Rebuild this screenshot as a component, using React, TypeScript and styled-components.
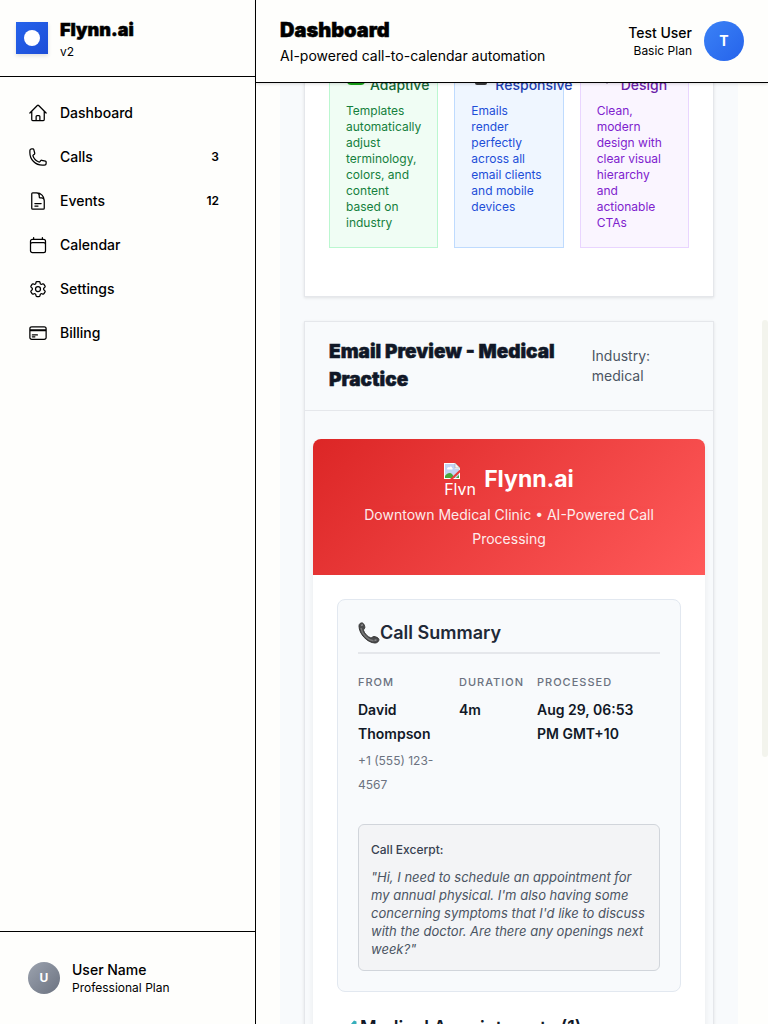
import React, { useLayoutEffect, useRef } from "react";
import styled, { createGlobalStyle } from "styled-components";
import {
  HiOutlineHome,
  HiOutlinePhone,
  HiOutlineDocumentText,
  HiOutlineCalendar,
  HiOutlineCog6Tooth,
  HiOutlineCreditCard,
} from "react-icons/hi2";

const GlobalStyle = createGlobalStyle`
  *, *::before, *::after { box-sizing: border-box; }
  body {
    margin: 0;
    background: #fefefc;
    color: #000;
    font-family: Inter, "Liberation Sans", sans-serif;
    font-size: 14px;
    line-height: 20px;
    -webkit-font-smoothing: antialiased;
  }
  h1, h2, h3, h4, p, dl, dd, ul { margin: 0; padding: 0; }
  ul { list-style: none; }
`;

const Shell = styled.div`
  display: grid;
  grid-template-columns: 256px minmax(0, 1fr);
  height: 100vh;
`;

const Sidebar = styled.aside`
  display: flex;
  flex-direction: column;
  border-right: 1px solid #000;
`;

const Brand = styled.div`
  display: flex;
  align-items: center;
  gap: 12px;
  padding: 16px;
  border-bottom: 1px solid #000;
`;

const BrandMark = styled.div`
  display: grid;
  place-items: center;
  width: 32px;
  height: 32px;
  background: linear-gradient(135deg, #2563eb, #1d4ed8);
  box-shadow: 0 2px 4px rgba(0, 0, 0, 0.12);

  &::after {
    content: "";
    width: 16px;
    height: 16px;
    border-radius: 50%;
    background: #fff;
  }
`;

const DisplayText = styled.h2<{ $size: number; $color?: string }>`
  font-size: ${(p) => p.$size}px;
  line-height: 28px;
  font-weight: 900;
  color: ${(p) => p.$color ?? "#000"};
  -webkit-text-stroke: 0.5px currentColor;
`;

const Small = styled.p`
  font-size: 12px;
  line-height: 16px;
`;

const Nav = styled.nav`
  flex: 1;
  padding: 16px;
`;

const NavList = styled.ul`
  display: flex;
  flex-direction: column;
  gap: 4px;
`;

const NavLink = styled.a`
  display: flex;
  align-items: center;
  gap: 12px;
  height: 40px;
  padding: 0 12px;
  color: inherit;
  font-weight: 500;
  text-decoration: none;

  svg { width: 20px; height: 20px; }
`;

const NavCount = styled.span`
  margin-left: auto;
  padding: 0 8px;
  font-size: 12px;
  line-height: 16px;
  font-weight: 600;
`;

const SidebarFooter = styled.div`
  padding: 16px;
  border-top: 1px solid #000;
`;

const Account = styled.div`
  display: flex;
  align-items: center;
  gap: 12px;
  padding: 12px;
`;

const Avatar = styled.div<{ $size: number; $from: string; $to: string }>`
  display: grid;
  place-items: center;
  width: ${(p) => p.$size}px;
  height: ${(p) => p.$size}px;
  border-radius: 50%;
  background: linear-gradient(135deg, ${(p) => p.$from}, ${(p) => p.$to});
  color: #fff;
  font-size: ${(p) => (p.$size > 32 ? 14 : 12)}px;
  font-weight: 700;
`;

const PersonName = styled.p`
  font-weight: 500;
`;

const Main = styled.div`
  display: flex;
  flex-direction: column;
  min-height: 0;
`;

const TopBar = styled.header`
  position: relative;
  z-index: 1;
  display: flex;
  align-items: center;
  justify-content: space-between;
  padding: 16px 24px;
  border-bottom: 1px solid #000;
  background: #fefefc;
  box-shadow: 0 1px 3px rgba(0, 0, 0, 0.15);
`;

const Tagline = styled.p`
  margin-top: 2px;
`;

const TopUser = styled.div`
  display: flex;
  align-items: center;
  gap: 12px;
  text-align: right;
`;

const Viewport = styled.div`
  display: grid;
  grid-template-columns: minmax(0, 1fr) 6px;
  grid-template-rows: minmax(0, 1fr);
  flex: 1;
  min-height: 0;
`;

const Scroller = styled.main`
  overflow-y: auto;
  padding: 24px;
  scrollbar-width: none;
`;

const ScrollTrack = styled.div`
  display: grid;
  grid-template-rows: 237fr 437fr 267fr;
`;

const ScrollThumb = styled.div`
  grid-row: 2;
  border-radius: 3px;
  background: #f3f4ed;
`;

const Canvas = styled.div`
  display: flex;
  flex-direction: column;
  gap: 24px;
  padding: 24px;
  background: #f8fafc;
`;

const Card = styled.section`
  border: 1px solid #e5e7eb;
  background: #fff;
  box-shadow: 0 1px 3px rgba(0, 0, 0, 0.1);
`;

const Features = styled.div`
  display: grid;
  grid-template-columns: repeat(3, minmax(0, 1fr));
  gap: 16px;
  padding: 24px 24px 48px;
`;

const tones = {
  green: { bg: "#f0fdf4", line: "#bbf7d0", title: "#166534", text: "#15803d" },
  blue: { bg: "#eff6ff", line: "#bfdbfe", title: "#1e40af", text: "#1d4ed8" },
  purple: { bg: "#faf5ff", line: "#e9d5ff", title: "#6b21a8", text: "#7e22ce" },
};

type Tone = keyof typeof tones;

const FeatureBox = styled.article<{ $tone: Tone }>`
  padding: 16px;
  border: 1px solid ${(p) => tones[p.$tone].line};
  background: ${(p) => tones[p.$tone].bg};
  color: ${(p) => tones[p.$tone].text};
`;

const FeatureTitle = styled.h4<{ $tone: Tone }>`
  display: flex;
  align-items: center;
  gap: 4px;
  margin-bottom: 8px;
  color: ${(p) => tones[p.$tone].title};
  font-size: 14px;
  font-weight: 500;

  svg { flex: none; }
`;

const PreviewHeader = styled.div`
  display: flex;
  align-items: center;
  justify-content: space-between;
  padding: 16px 24px;
  border-bottom: 1px solid #e5e7eb;
  background: #f8fafc;
`;

const Industry = styled.p`
  flex: 0 0 27%;
  padding-right: 24px;
  color: #4b5563;
`;

const EmailStage = styled.div`
  padding: 28px 8px;
  background: #f8fafc;
`;

const Email = styled.article`
  overflow: hidden;
  border-radius: 8px;
  background: #fff;
  box-shadow: 0 4px 6px rgba(0, 0, 0, 0.07);
`;

const EmailHero = styled.div`
  padding: 24px;
  background: linear-gradient(135deg, #dc2626, #ff5a5a);
  color: #fff;
  text-align: center;
`;

const HeroBrand = styled.div`
  display: flex;
  align-items: center;
  justify-content: center;
  gap: 8px;
  margin-bottom: 8px;
`;

const LogoFallback = styled.div`
  width: 32px;
  height: 32px;
  overflow: hidden;
  text-align: left;
  font-size: 16px;
  line-height: 20px;
  white-space: nowrap;

  svg { display: block; }
`;

const HeroName = styled.h3`
  font-size: 23px;
  line-height: 32px;
  font-weight: 700;
`;

const HeroLine = styled.p`
  line-height: 24px;
  opacity: 0.9;
`;

const EmailBody = styled.div`
  padding: 24px;
`;

const Summary = styled.section`
  margin-bottom: 24px;
  padding: 20px;
  border: 1px solid #e2e8f0;
  border-radius: 8px;
  background: #f8fafc;
`;

const SectionTitle = styled.h3`
  display: flex;
  align-items: center;
  color: #111827;
  font-size: 18px;
  line-height: 24px;
  font-weight: 600;
`;

const SummaryTitle = styled(SectionTitle)`
  padding-bottom: 6px;
  border-bottom: 2px solid #e5e7eb;
  color: #1f2937;
  line-height: 26px;
`;

const Facts = styled.dl`
  display: grid;
  grid-template-columns: minmax(0, 85fr) minmax(0, 62fr) minmax(0, 107fr);
  gap: 16px;
  margin: 20px 0 27px;
  padding-right: 16px;
`;

const FactLabel = styled.dt`
  margin-bottom: 8px;
  color: #6b7280;
  font-size: 11px;
  line-height: 16px;
  font-weight: 500;
  letter-spacing: 1px;
  text-transform: uppercase;
`;

const FactValue = styled.dd`
  color: #111827;
  line-height: 24px;
  font-weight: 600;
`;

const FactNote = styled.dd`
  margin-top: 3px;
  color: #6b7280;
  font-size: 12px;
  line-height: 24px;
`;

const Excerpt = styled.div`
  padding: 12px;
  border: 1px solid #d1d5db;
  border-radius: 6px;
  background: #f3f4f6;
`;

const ExcerptLabel = styled.p`
  margin-bottom: 5px;
  color: #374151;
  font-size: 12px;
  line-height: 26px;
  font-weight: 500;
`;

const Quote = styled.p`
  color: #4b5563;
  font-size: 13px;
  line-height: 18px;
  font-style: italic;
`;

const CheckGlyph = () => (
  <svg width="20" height="20" viewBox="0 0 20 20" aria-hidden="true">
    <rect x="1" y="1" width="18" height="19" rx="4" fill="#16a316" />
    <path d="M5 10l4 4 7-9" fill="none" stroke="#fff" strokeWidth="2.5" />
  </svg>
);

const MobileGlyph = () => (
  <svg width="20" height="20" viewBox="0 0 20 20" aria-hidden="true">
    <rect x="4" y="0" width="12" height="20" rx="2" fill="#3a3a3c" />
    <rect x="6" y="2" width="8" height="14" fill="#6aa8e8" />
  </svg>
);

const SparkGlyph = () => (
  <svg width="20" height="20" viewBox="0 0 20 20" aria-hidden="true">
    <path d="M8 3l2 5 5 2-5 2-2 5-2-5-5-2 5-2z" fill="#f6c445" />
    <circle cx="10" cy="18" r="1" fill="#b9a9c9" />
  </svg>
);

const HandsetGlyph = () => (
  <svg width="22" height="24" viewBox="0 0 22 24" aria-hidden="true">
    <path
      d="M1 5C1 2.500 3 1.500 4.500 2c1.500.6 2.500 3.500 2.300 4.800C6.600 8 5.300 8.200 5.600 9.500c.8 3 4 6.300 7 7.300 1.200.4 1.700-1.200 3.400-1.200 1.800 0 4.700 1.400 4.900 2.800.2 1.800-1.700 3.600-3.900 3.600C9.500 21.800 1 13 1 5z"
      fill="#4b4b4d"
      stroke="#333"
      strokeWidth="1"
    />
    <path d="M3 7c.8 6 6.500 12 12.500 12.800" fill="none" stroke="#777" strokeWidth="1.500" />
    <path d="M3 4.500l2-.8M16.500 19.500l2-.6" stroke="#8a8a8c" strokeWidth="1.500" />
  </svg>
);

const MedicalGlyph = () => (
  <svg width="23" height="24" viewBox="0 0 23 24" aria-hidden="true">
    <path d="M14 8l3-3.500 2.500 1V9l-8 9-4-3z" fill="#35aebb" />
    <path d="M4 20l5-5 2 2-5 5z" fill="#8aa0ad" />
  </svg>
);

const BrokenImageGlyph = () => (
  <svg width="16" height="16" viewBox="0 0 16 16" aria-hidden="true">
    <path d="M0 0h11l5 5v11H0z" fill="#fff" />
    <path d="M1 1h10v5h4v9H1z" fill="#c3d4f5" />
    <path d="M3 6c0-2 2-2 2.500-1.500C6 3 8 3.500 8 5c1 0 1 1.500 0 1.500H3.500z" fill="#fff" />
    <path d="M1 15v-2c2-3 5-4 7-2l3 4z" fill="#4ba63a" />
    <path d="M11 0l5 5h-5z" fill="#f4f4f4" stroke="#999" strokeWidth="0.500" />
    <path d="M16 6.500v3L9 16H6z" fill="#e93c3c" />
    <path d="M12 15l3-3v3z" fill="#4ba63a" />
  </svg>
);

const navItems = [
  { label: "Dashboard", Icon: HiOutlineHome },
  { label: "Calls", Icon: HiOutlinePhone, count: 3 },
  { label: "Events", Icon: HiOutlineDocumentText, count: 12 },
  { label: "Calendar", Icon: HiOutlineCalendar },
  { label: "Settings", Icon: HiOutlineCog6Tooth },
  { label: "Billing", Icon: HiOutlineCreditCard },
];

const features: { tone: Tone; title: string; text: string; Glyph: React.FC }[] = [
  {
    tone: "green",
    title: "Industry Adaptive",
    text: "Templates automatically adjust terminology, colors, and content based on industry",
    Glyph: CheckGlyph,
  },
  {
    tone: "blue",
    title: "Mobile Responsive",
    text: "Emails render perfectly across all email clients and mobile devices",
    Glyph: MobileGlyph,
  },
  {
    tone: "purple",
    title: "Modern Design",
    text: "Clean, modern design with clear visual hierarchy and actionable CTAs",
    Glyph: SparkGlyph,
  },
];

// Distance the preview page is scrolled when it opens.
const INITIAL_SCROLL = 118;

export default function App() {
  const scroller = useRef<HTMLElement>(null);

  useLayoutEffect(() => {
    if (scroller.current) scroller.current.scrollTop = INITIAL_SCROLL;
  }, []);

  return (
    <>
      <GlobalStyle />
      <Shell>
        <Sidebar>
          <Brand>
            <BrandMark />
            <div>
              <DisplayText $size={18}>Flynn.ai</DisplayText>
              <Small>v2</Small>
            </div>
          </Brand>
          <Nav aria-label="Main">
            <NavList>
              {navItems.map(({ label, Icon, count }) => (
                <li key={label}>
                  <NavLink href="#">
                    <Icon />
                    {label}
                    {count && <NavCount>{count}</NavCount>}
                  </NavLink>
                </li>
              ))}
            </NavList>
          </Nav>
          <SidebarFooter>
            <Account>
              <Avatar $size={32} $from="#9ca3af" $to="#6b7280">U</Avatar>
              <div>
                <PersonName>User Name</PersonName>
                <Small>Professional Plan</Small>
              </div>
            </Account>
          </SidebarFooter>
        </Sidebar>

        <Main>
          <TopBar>
            <div>
              <DisplayText as="h1" $size={20}>Dashboard</DisplayText>
              <Tagline>AI-powered call-to-calendar automation</Tagline>
            </div>
            <TopUser>
              <div>
                <PersonName>Test User</PersonName>
                <Small>Basic Plan</Small>
              </div>
              <Avatar $size={40} $from="#3b82f6" $to="#2563eb">T</Avatar>
            </TopUser>
          </TopBar>

          <Viewport>
            <Scroller ref={scroller}>
              <Canvas>
                <Card>
                  <Features>
                    {features.map(({ tone, title, text, Glyph }) => (
                      <FeatureBox key={tone} $tone={tone}>
                        <FeatureTitle $tone={tone}>
                          <Glyph />
                          {title}
                        </FeatureTitle>
                        <Small>{text}</Small>
                      </FeatureBox>
                    ))}
                  </Features>
                </Card>

                <Card>
                  <PreviewHeader>
                    <DisplayText $size={19} $color="#111827">
                      Email Preview - Medical Practice
                    </DisplayText>
                    <Industry>Industry: medical</Industry>
                  </PreviewHeader>
                  <EmailStage>
                    <Email>
                      <EmailHero>
                        <HeroBrand>
                          <LogoFallback>
                            <BrokenImageGlyph />
                            Flynn.ai
                          </LogoFallback>
                          <HeroName>Flynn.ai</HeroName>
                        </HeroBrand>
                        <HeroLine>Downtown Medical Clinic • AI-Powered Call Processing</HeroLine>
                      </EmailHero>
                      <EmailBody>
                        <Summary>
                          <SummaryTitle>
                            <HandsetGlyph />
                            Call Summary
                          </SummaryTitle>
                          <Facts>
                            <div>
                              <FactLabel>From</FactLabel>
                              <FactValue>David Thompson</FactValue>
                              <FactNote>+1 (555) 123-4567</FactNote>
                            </div>
                            <div>
                              <FactLabel>Duration</FactLabel>
                              <FactValue>4m</FactValue>
                            </div>
                            <div>
                              <FactLabel>Processed</FactLabel>
                              <FactValue>Aug 29, 06:53 PM GMT+10</FactValue>
                            </div>
                          </Facts>
                          <Excerpt>
                            <ExcerptLabel>Call Excerpt:</ExcerptLabel>
                            <Quote>
                              "Hi, I need to schedule an appointment for my annual physical. I'm
                              also having some concerning symptoms that I'd like to discuss with
                              the doctor. Are there any openings next week?"
                            </Quote>
                          </Excerpt>
                        </Summary>
                        <SectionTitle>
                          <MedicalGlyph />
                          Medical Appointments (1)
                        </SectionTitle>
                      </EmailBody>
                    </Email>
                  </EmailStage>
                </Card>
              </Canvas>
            </Scroller>
            <ScrollTrack aria-hidden="true">
              <ScrollThumb />
            </ScrollTrack>
          </Viewport>
        </Main>
      </Shell>
    </>
  );
}
